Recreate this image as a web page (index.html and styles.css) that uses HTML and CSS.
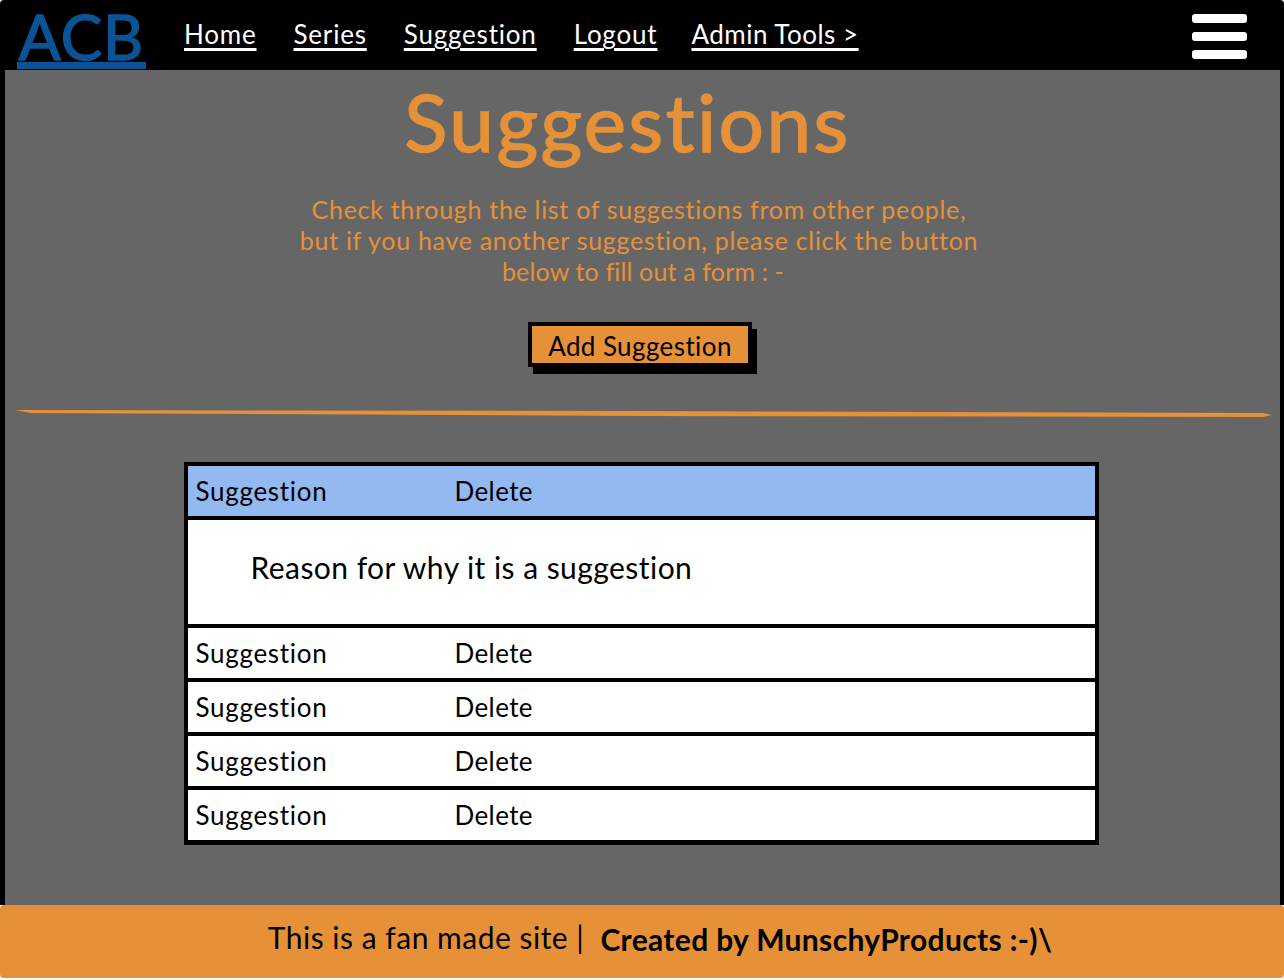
FILE: index.html
```html
<!DOCTYPE html>
<html lang="en">
<head>
    <meta charset="UTF-8">
    <meta name="viewport" content="width=device-width, initial-scale=1.0">
    <title>Suggestions</title>
    <link rel="stylesheet" href="styles.css">
</head>
<body>
    <header class="topbar">
        <a class="logo" href="#">ACB</a>
        <nav class="nav">
            <a href="#">Home</a>
            <a href="#">Series</a>
            <a href="#">Suggestion</a>
            <a href="#">Logout</a>
            <a href="#">Admin Tools &gt;</a>
        </nav>
        <div class="burger">
            <span></span>
            <span></span>
            <span></span>
        </div>
    </header>

    <main class="content">
        <h1>Suggestions</h1>
        <p class="intro">Check through the list of suggestions from other people,<br>but if you have another suggestion, please click the button<br><span class="intro-end">below to fill out a form : -</span></p>
        <button class="add-btn" type="button">Add Suggestion</button>

        <svg class="divider" viewBox="0 0 1284 10" width="1284" height="10">
            <polygon points="14,2 640,3 1262,5 1271,7 1262,9 640,8 30,5" fill="#e69138"/>
        </svg>

        <!-- Suggestion list -->
        <div class="list">
            <div class="row row-open"><span>Suggestion</span><span>Delete</span></div>
            <div class="reason">Reason for why it is a suggestion</div>
            <div class="row"><span>Suggestion</span><span>Delete</span></div>
            <div class="row"><span>Suggestion</span><span>Delete</span></div>
            <div class="row"><span>Suggestion</span><span>Delete</span></div>
            <div class="row"><span>Suggestion</span><span>Delete</span></div>
        </div>
    </main>

    <footer class="footer">
        <span class="footer-note">This is a fan made site |</span>
        <strong class="footer-credit">Created by MunschyProducts :-)\</strong>
    </footer>
</body>
</html>
```

FILE: styles.css
```css
html, body {
    height: 100%;
}
body {
    font-family: Lato, "Open Sans", sans-serif;
    font-variant-ligatures: none;
    margin: 0;
    padding: 0 0 2px;
    box-sizing: border-box;
    display: flex;
    flex-direction: column;
    background-color: #fff;
    color: #000;
    overflow: hidden;
}
.topbar {
    height: 70px;
    flex: none;
    display: flex;
    align-items: flex-start;
    background-color: #000;
    border-radius: 4px 4px 0 0;
}
.logo {
    margin: 0 0 0 17px;
    padding-top: 5px;
    width: 129px;
    height: 57px;
    border-bottom: 7px solid #0b5394;
    color: #0b5394;
    font-size: 62px;
    line-height: 62px;
    letter-spacing: 1px;
    text-align: center;
    text-decoration: none;
    -webkit-text-stroke: 1.5px #0b5394;
}
.nav {
    display: flex;
    gap: 37px;
    margin: 17px 0 0 38px;
}
.nav a {
    color: #fff;
    font-size: 26px;
    line-height: 34px;
    letter-spacing: 0.8px;
    text-decoration: underline;
    text-decoration-thickness: 3px;
    text-underline-offset: 4px;
}
.nav a:last-child {
    margin-left: -3px;
    letter-spacing: 0.5px;
}
.burger {
    margin: 14px 37px 0 auto;
    width: 55px;
    display: flex;
    flex-direction: column;
    gap: 9px;
}
.burger span {
    height: 9px;
    border-radius: 3px;
    background-color: #fff;
}
.content {
    flex: 1;
    display: flex;
    flex-direction: column;
    align-items: center;
    background-color: #666;
    border-left: 5px solid #000;
    border-right: 4px solid #000;
}
h1 {
    margin: 9px 30px 0 0;
    color: #e69138;
    font-size: 80px;
    font-weight: 400;
    line-height: 84px;
    letter-spacing: 2.5px;
    -webkit-text-stroke: 1.5px #e69138;
}
.intro {
    margin: 31px 7px 0 0;
    color: #e69138;
    font-size: 25px;
    line-height: 31px;
    letter-spacing: 0.7px;
    text-align: center;
}
.intro-end {
    padding-left: 8px;
    letter-spacing: 0.15px;
}
.add-btn {
    margin: 35px 5px 0 0;
    width: 224px;
    height: 45px;
    padding: 2px 0 0;
    box-sizing: border-box;
    border: 4px solid #000;
    box-shadow: 5px 7px 0 #000;
    background-color: #e69138;
    color: #000;
    font-family: inherit;
    font-size: 26px;
    letter-spacing: 0.4px;
}
.divider {
    flex: none;
    margin: 41px 0 0;
    display: block;
}
.list {
    margin: 44px 3px 0 0;
    width: 915px;
    box-sizing: border-box;
    border: 4px solid #000;
    border-bottom-width: 5px;
    background-color: #000;
    display: flex;
    flex-direction: column;
    gap: 4px;
}
.row {
    height: 50px;
    display: grid;
    grid-template-columns: 259px 1fr;
    align-items: center;
    padding-left: 8px;
    background-color: #fff;
    font-size: 26px;
    letter-spacing: 0.4px;
}
.row span:first-child {
    letter-spacing: 0.7px;
}
.row-open {
    background-color: #93b9f1;
}
.reason {
    height: 104px;
    box-sizing: border-box;
    padding: 29px 0 0 63px;
    background-color: #fff;
    font-size: 30px;
    line-height: 36px;
    letter-spacing: 0.45px;
}
.footer {
    flex: none;
    height: 73px;
    display: flex;
    align-items: flex-start;
    justify-content: center;
    gap: 16px;
    padding-left: 36px;
    background-color: #e69138;
    border-radius: 4px;
    font-size: 30px;
    line-height: 36px;
}
.footer-note {
    margin-top: 14px;
    letter-spacing: 0.5px;
}
.footer-credit {
    margin-top: 16px;
    letter-spacing: 0.35px;
}
```
